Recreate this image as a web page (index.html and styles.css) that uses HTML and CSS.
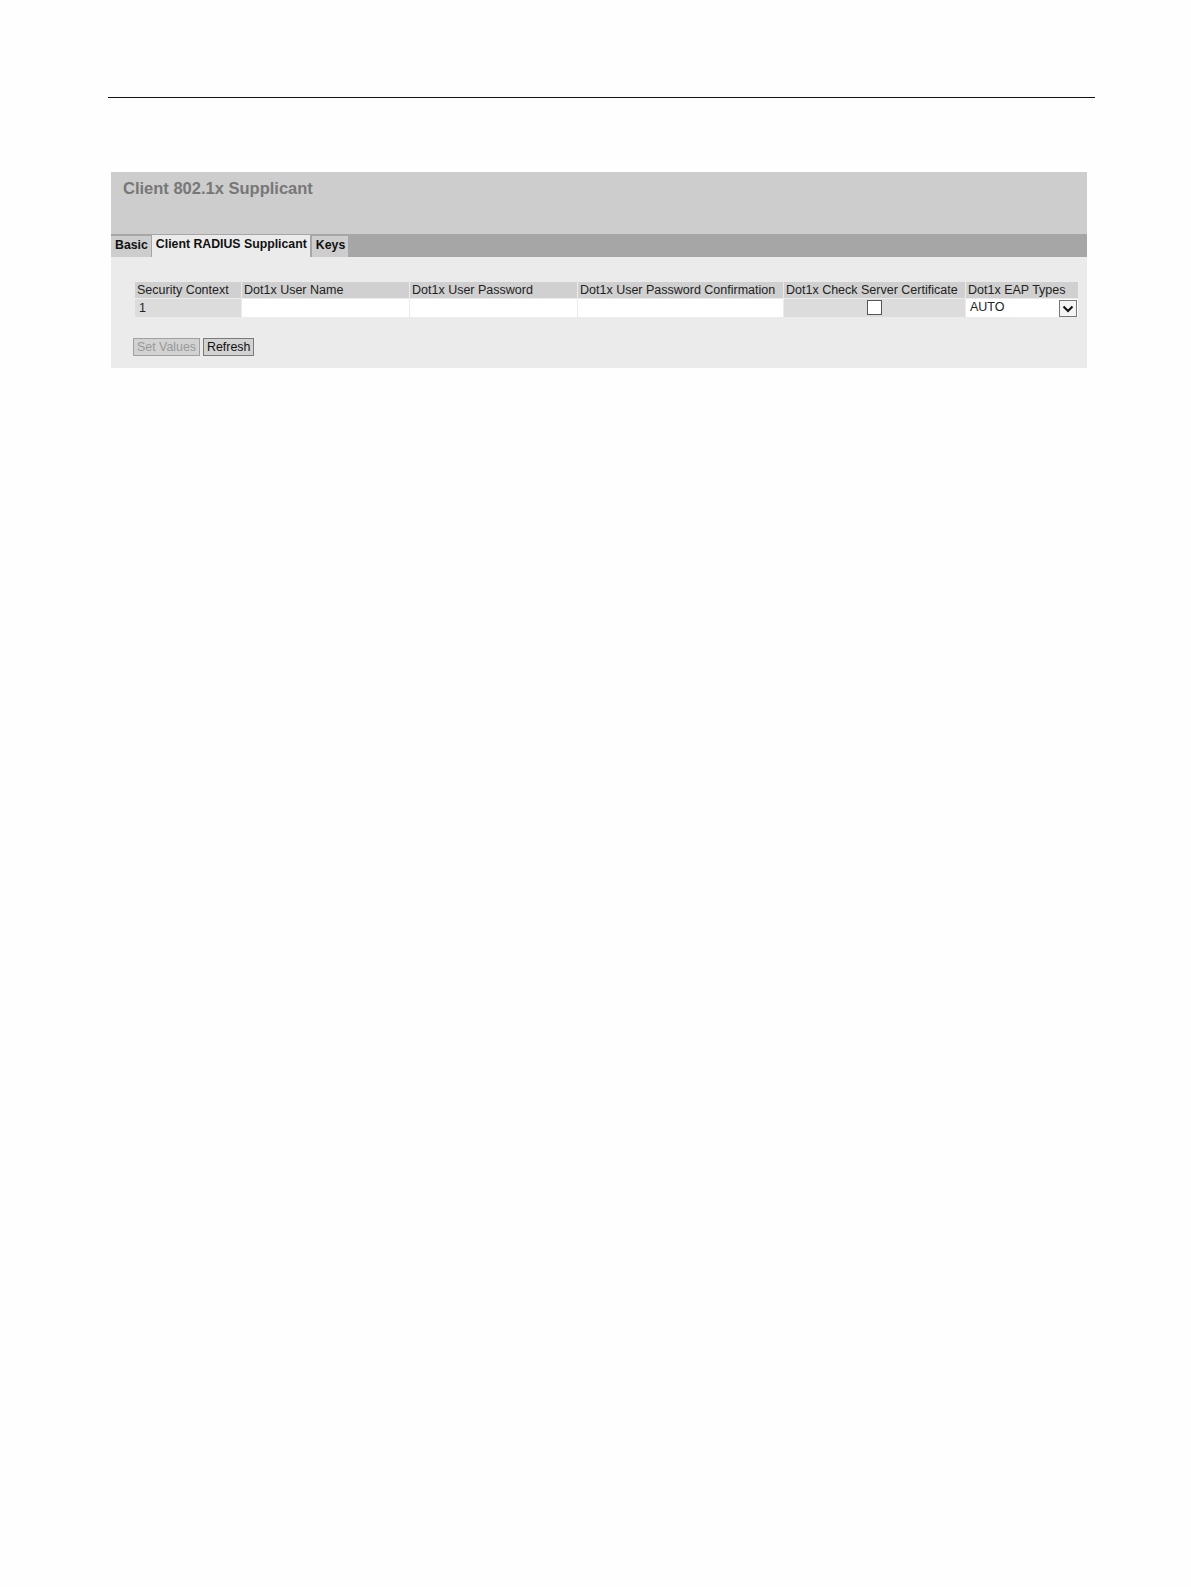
FILE: index.html
```html
<!DOCTYPE html>
<html>
<head>
<meta charset="utf-8">
<link rel="stylesheet" href="styles.css">
</head>
<body>
<div class="rule"></div>
<div class="panel">
  <div class="header"><h1 class="title">Client 802.1x Supplicant</h1></div>
  <div class="tabbar">
    <span class="tab">Basic</span>
    <span class="tab active">Client RADIUS Supplicant</span>
    <span class="tab">Keys</span>
  </div>
  <div class="content">
    <table class="grid">
      <tr>
        <th class="c1">Security Context</th>
        <th class="c2">Dot1x User Name</th>
        <th class="c3">Dot1x User Password</th>
        <th class="c4">Dot1x User Password Confirmation</th>
        <th class="c5">Dot1x Check Server Certificate</th>
        <th class="c6">Dot1x EAP Types</th>
      </tr>
      <tr>
        <td class="ro">1</td>
        <td class="inp"></td>
        <td class="inp"></td>
        <td class="inp"></td>
        <td class="ro center"><span class="check"></span></td>
        <td class="inp sel"><span class="selval">AUTO</span><span class="arrow"><svg width="12" height="8" viewBox="0 0 12 8"><path d="M1.5 1.5 L6 6 L10.5 1.5" fill="none" stroke="#111" stroke-width="2"/></svg></span></td>
      </tr>
    </table>
    <div class="buttons">
      <span class="btn disabled">Set Values</span>
      <span class="btn">Refresh</span>
    </div>
  </div>
</div>
</body>
</html>
```

FILE: styles.css
```css
html, body {
  margin: 0;
  padding: 0;
  background: #fefefe;
  font-family: "Liberation Sans", Arial, sans-serif;
}
.rule {
  margin: 97px 0 0 108px;
  width: 987px;
  height: 1px;
  background: #111;
}
.panel {
  margin: 74px 0 0 111px;
  width: 976px;
}
.header {
  height: 62px;
  background: #cdcdcd;
  box-sizing: border-box;
  padding: 6px 0 0 12px;
}
.title {
  margin: 0;
  font-size: 16.5px;
  font-weight: bold;
  color: #777;
  line-height: 20px;
}
.tabbar {
  height: 23px;
  background: #a6a6a6;
  display: flex;
  align-items: flex-end;
  gap: 1px;
  padding-left: 0;
}
.tab {
  height: 21px;
  line-height: 18px;
  padding: 0 3px 0 4px;
  background: #cdcdcd;
  font-size: 12.3px;
  font-weight: bold;
  color: #111;
  box-sizing: border-box;
}
.tab.active {
  background: #ebebeb;
  height: 22px;
  line-height: 19px;
  margin-right: 1px;
}
.content {
  background: #ebebeb;
  padding: 25px 0 12px 24px;
}
.grid {
  border-collapse: separate;
  border-spacing: 1px;
  margin: -1px 0 0 -1px;
  font-size: 12.5px;
  color: #222;
}
.grid th {
  background: #d0d0d0;
  font-weight: normal;
  text-align: left;
  padding: 0 2px;
  height: 16px;
  line-height: 16px;
  white-space: nowrap;
}
.grid td {
  height: 18px;
  padding: 0 4px;
  line-height: 18px;
}
.c1 { width: 102px; }
.c2 { width: 163px; }
.c3 { width: 163px; }
.c4 { width: 201px; }
.c5 { width: 177px; }
.c6 { width: 108px; }
.ro { background: #dcdcdc; }
.inp { background: #fff; }
.center { text-align: center; }
.check {
  display: inline-block;
  width: 13px;
  height: 13px;
  border: 1px solid #555;
  background: #fff;
  vertical-align: middle;
  margin-top: -2px;
}
.sel {
  position: relative;
  padding: 0 2px 0 4px;
}
.selval {
  display: inline-block;
  line-height: 16px;
  vertical-align: top;
}
.arrow {
  position: absolute;
  right: 1px;
  top: 1px;
  width: 16px;
  height: 15px;
  border: 1px solid #777;
  background: #f4f4f4;
  display: flex;
  align-items: center;
  justify-content: center;
}
.buttons {
  margin: 20px 0 0 -2px;
  display: flex;
  gap: 3px;
}
.btn {
  display: inline-block;
  height: 18px;
  box-sizing: border-box;
  line-height: 16px;
  padding: 0 3px;
  background: #d2d2d2;
  border: 1px solid #7a7a7a;
  font-size: 12.4px;
  color: #111;
}
.btn.disabled {
  color: #999;
  border-color: #a0a0a0;
}
```
